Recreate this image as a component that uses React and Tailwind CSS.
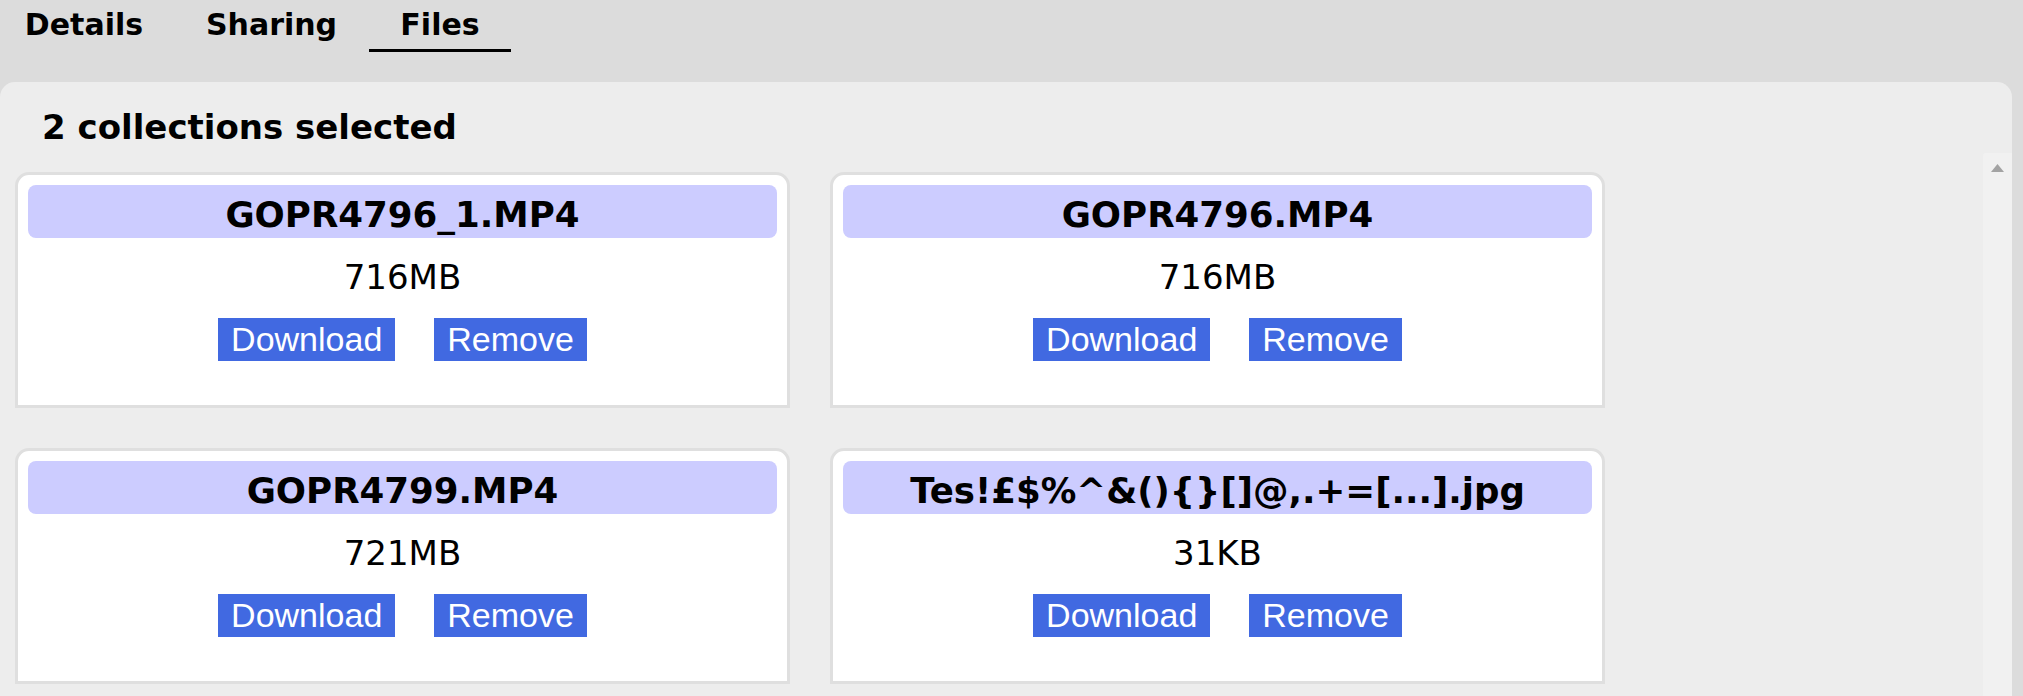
import React from "react";

const files = [
  { name: "GOPR4796_1.MP4", size: "716MB" },
  { name: "GOPR4796.MP4", size: "716MB" },
  { name: "GOPR4799.MP4", size: "721MB" },
  { name: "Tes!£$%^&(){}[]@,.+=[...].jpg", size: "31KB" },
];

const tabs = [
  { label: "Details", width: "w-[180px]" },
  { label: "Sharing", width: "w-[195px]" },
  { label: "Files", width: "w-[142px]", active: true },
];

// one file card: name bar, size and the two actions
const FileCard = ({ file }) => (
  <div className="h-[236px] bg-white border-[3px] border-[#dfdfdf] rounded-t-[14px] p-[10px]">
    <div className="h-[53px] bg-[#ccccff] rounded-[8px] pt-[9px] text-center text-[35.6px] leading-[41px] font-bold text-black whitespace-nowrap">
      {file.name}
    </div>
    <div className="mt-[19px] text-center text-[34px] leading-[40px] text-black">{file.size}</div>
    <div className="mt-[21px] flex justify-center gap-[39px] font-['Liberation_Sans',Arial,sans-serif]">
      <button className="h-[43px] px-[13px] bg-[#4169e1] text-white text-[34px] leading-[43px]">Download</button>
      <button className="h-[43px] px-[13px] bg-[#4169e1] text-white text-[34px] leading-[43px]">Remove</button>
    </div>
  </div>
);

export default function App() {
  return (
    <div className="w-[2023px] h-[696px] overflow-hidden bg-[#dcdcdc] font-['DejaVu_Sans',Verdana,sans-serif] text-black">
      {/* tab strip */}
      <div className="h-[82px] flex items-start ml-[-6px]">
        {tabs.map((t) => (
          <div
            key={t.label}
            className={`${t.width} pt-[7px] pb-[7px] text-center text-[30px] leading-[35px] font-bold border-b-[3px] ${
              t.active ? "border-black" : "border-transparent"
            }`}
          >
            {t.label}
          </div>
        ))}
      </div>

      {/* files panel */}
      <div className="w-[2012px] h-[614px] bg-[#ededed] rounded-t-[15px] flex flex-col">
        <h2 className="pl-[42px] pt-[25px] text-[34px] leading-[40px] font-bold">2 collections selected</h2>
        <div className="mt-[6px] flex flex-1 min-h-0">
          <div className="flex-1 pl-[15px] pt-[19px]">
            <div className="grid grid-cols-[775px_775px] gap-x-[40px] gap-y-[40px]">
              {files.map((f) => (
                <FileCard key={f.name} file={f} />
              ))}
            </div>
          </div>
          <div className="w-[29px] bg-[#f1f1f1] rounded-tl-[3px] flex justify-center pt-[11px]">
            <svg width="13" height="8" viewBox="0 0 13 8">
              <path d="M6.5 0 L13 8 L0 8 Z" fill="#a3a3a3" />
            </svg>
          </div>
        </div>
      </div>
    </div>
  );
}
